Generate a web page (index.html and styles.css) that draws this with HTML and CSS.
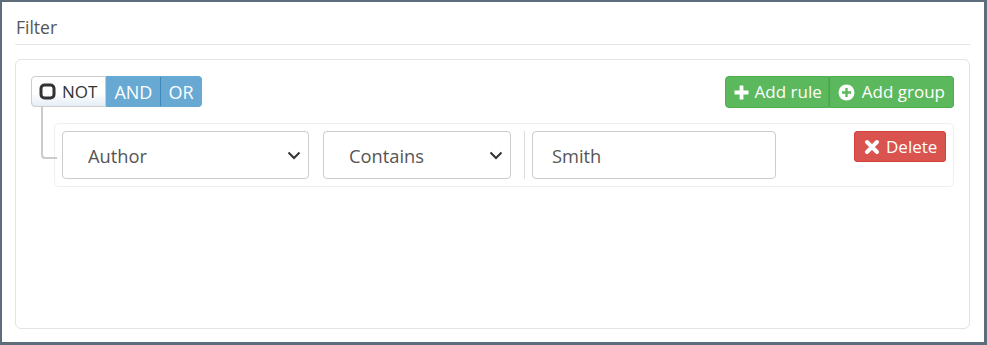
FILE: index.html
```html
<!DOCTYPE html>
<html lang="en">
<head>
    <meta charset="UTF-8">
    <title>Filter</title>
    <link rel="stylesheet" href="styles.css">
</head>
<body>
    <div class="frame">
        <div class="title">Filter</div>

        <div class="panel">
            <div class="group-header">
                <div class="btn-group">
                    <button class="btn btn-not">
                        <svg class="icon" width="17" height="17" viewBox="0 0 17 17"><rect x="2" y="2" width="13" height="13" rx="3.5" fill="none" stroke="#333" stroke-width="3"/></svg>
                        NOT
                    </button>
                    <button class="btn btn-cond">AND</button>
                    <button class="btn btn-cond">OR</button>
                </div>
                <div class="btn-group">
                    <button class="btn btn-add btn-add-rule">
                        <svg class="icon" width="17" height="17" viewBox="0 0 17 17"><path d="M6.6 1.5h3.8v5.1h5.1v3.8h-5.1v5.1H6.6v-5.1H1.5V6.6h5.1z" fill="#fff"/></svg>
                        Add rule
                    </button>
                    <button class="btn btn-add btn-add-group">
                        <svg class="icon" width="17" height="17" viewBox="0 0 17 17"><circle cx="8.5" cy="8.5" r="8" fill="#fff"/><path d="M7.3 4h2.4v3.3H13v2.4H9.7V13H7.3V9.7H4V7.3h3.3z" fill="#5cb85c"/></svg>
                        Add group
                    </button>
                </div>
            </div>

            <div class="rules">
                <div class="rule">
                    <div class="select select-field">
                        <span>Author</span>
                        <svg width="14" height="9" viewBox="0 0 14 9"><path d="M1.5 1.5l5.5 5.5 5.5-5.5" fill="none" stroke="#333" stroke-width="2"/></svg>
                    </div>
                    <div class="select select-operator">
                        <span>Contains</span>
                        <svg width="14" height="9" viewBox="0 0 14 9"><path d="M1.5 1.5l5.5 5.5 5.5-5.5" fill="none" stroke="#333" stroke-width="2"/></svg>
                    </div>
                    <div class="rule-divider"></div>
                    <div class="value-input">Smith</div>
                    <button class="btn btn-delete">
                        <svg class="icon" width="16" height="16" viewBox="0 0 16 16"><path d="M3 3l10 10M13 3L3 13" stroke="#fff" stroke-width="4" stroke-linecap="round"/></svg>
                        Delete
                    </button>
                </div>
            </div>
        </div>
    </div>
</body>
</html>
```

FILE: styles.css
```css
* {
    margin: 0;
    padding: 0;
    box-sizing: border-box;
    font-family: "Open Sans", "Noto Sans", sans-serif;
}

body {
    background: #fff;
}

.frame {
    width: 987px;
    height: 345px;
    border: 2px solid #5d6d7c;
    border-right-width: 3px;
    border-bottom-width: 3px;
    padding: 0 14px 0 13px;
    background: #fff;
}

.title {
    font-size: 17.5px;
    line-height: 22px;
    padding: 14px 0 6px 1px;
    border-bottom: 1px solid #e5e5e5;
    color: #555;
}

.panel {
    margin-top: 14px;
    height: 270px;
    border: 1px solid #e3e3e3;
    border-radius: 6px;
    padding: 16px 15px 0 15px;
}

.group-header {
    display: flex;
    justify-content: space-between;
    align-items: flex-start;
}

.btn-group {
    display: flex;
}

.btn {
    display: flex;
    align-items: center;
    gap: 6px;
    font-size: 17px;
    line-height: 20px;
    border: 1px solid transparent;
    cursor: pointer;
}

.btn-group .btn:first-child {
    border-radius: 4px 0 0 4px;
}

.btn-group .btn:last-child {
    border-radius: 0 4px 4px 0;
}

.btn-not {
    height: 31px;
    padding: 0 8px 0 7px;
    background: linear-gradient(#fff 55%, #e4edf6);
    border-color: #ccc;
    color: #333;
}

.btn-cond {
    height: 31px;
    padding: 0 7px;
    font-size: 18px;
    background: #67a9d3;
    color: #fff;
    border-color: #67a9d3;
    border-left-color: #3c87b8;
}

.btn-cond:nth-child(2) {
    border-left-color: #67a9d3;
}

.btn-add {
    height: 32px;
    background: #5cb85c;
    border-color: #4cae4c;
    color: #fff;
}

.btn-add-rule {
    padding: 0 6px 0 7px;
    gap: 5px;
}

.btn-add-group {
    padding: 0 8px;
    gap: 7px;
    border-left-color: #48a648;
}

.rules {
    position: relative;
    margin: 15px 0 0 23px;
}

.rule {
    position: relative;
    display: flex;
    align-items: flex-start;
    height: 64px;
    padding: 7px;
    border: 1px solid #eee;
    border-radius: 5px;
}

.rule::before {
    content: "";
    position: absolute;
    left: -14px;
    top: -17px;
    width: 14px;
    height: 50px;
    border-left: 2px solid #ccc;
    border-bottom: 2px solid #ccc;
    border-bottom-left-radius: 4px;
}

.select,
.value-input {
    height: 48px;
    display: flex;
    align-items: center;
    border: 1px solid #ccc;
    border-radius: 4px;
    background: #fff;
    color: #555;
    font-size: 18.3px;
}

.select {
    justify-content: space-between;
    padding: 0 7px 0 25px;
}

.select svg {
    flex-shrink: 0;
}

.select-field {
    width: 247px;
}

.select-operator {
    width: 188px;
    margin-left: 14px;
}

.rule-divider {
    width: 1px;
    height: 48px;
    background: #ddd;
    margin: 0 7px 0 13px;
}

.value-input {
    width: 244px;
    padding-left: 19px;
}

.btn-delete {
    margin-left: auto;
    height: 31px;
    width: 92px;
    padding: 0 9px;
    border-radius: 3px;
    background: #d9534f;
    border-color: #d43f3a;
    color: #fff;
}

.icon {
    flex-shrink: 0;
}
```
